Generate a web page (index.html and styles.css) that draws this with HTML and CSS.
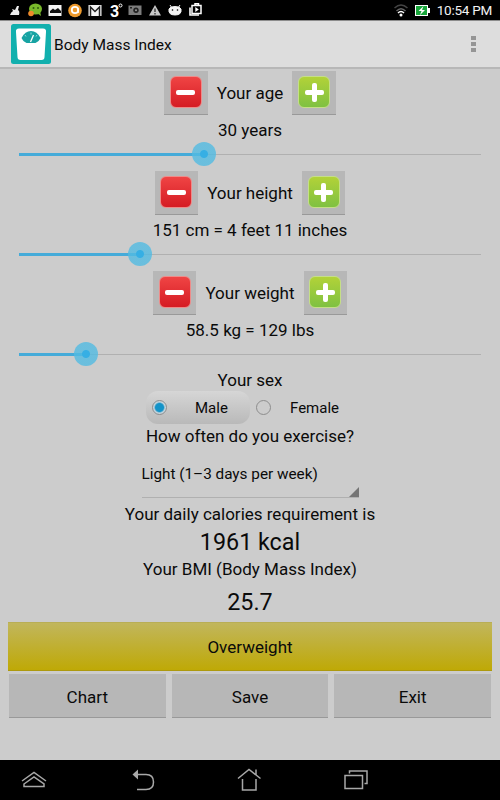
FILE: index.html
```html
<!DOCTYPE html>
<html lang="en">
<head>
    <meta charset="UTF-8">
    <meta name="viewport" content="width=device-width, initial-scale=1.0">
    <title>Body Mass Index</title>
    <link rel="stylesheet" href="styles.css">
</head>
<body>
    <!-- Status bar -->
    <div class="status-bar">
        <svg class="notifications" width="210" height="20" viewBox="0 0 210 20">
            <path d="M10 15q1-3 3-4l-1-2 3 1 2-4 2 0-1 4q2 1 1 5z" fill="#eee"/>
            <ellipse cx="35.500" cy="9" rx="6.500" ry="5.500" fill="#79b82b"/>
            <circle cx="33.500" cy="8" r="1" fill="#2f5c10"/>
            <circle cx="38" cy="8" r="1" fill="#2f5c10"/>
            <circle cx="31" cy="13.500" r="2.800" fill="#f08a2c"/>
            <path d="M37 13l4 3-1-5z" fill="#79b82b"/>
            <rect x="48.500" y="5" width="13" height="11" fill="#f4f4f4"/>
            <path d="M50 13V11l3-2.500 2 1.500 3-2 3 3v2z" fill="#111"/>
            <circle cx="75" cy="10.500" r="6.800" fill="#ee9a2c"/>
            <circle cx="75" cy="10" r="3.200" fill="none" stroke="#fff" stroke-width="1.800"/>
            <path d="M78 8v5" stroke="#fff" stroke-width="1.500"/>
            <rect x="88.500" y="5" width="13" height="11" fill="#f4f4f4"/>
            <path d="M90.500 16V7l4.500 4.500L99.500 7v9" fill="none" stroke="#222" stroke-width="1.500"/>
            <text x="110" y="16.500" class="temperature">3</text>
            <circle cx="120.500" cy="5.500" r="1.500" fill="none" stroke="#fff"/>
            <rect x="128.500" y="5.500" width="13" height="9.500" fill="#7d7d7d"/>
            <circle cx="136" cy="10.300" r="2.700" fill="#222"/>
            <circle cx="136" cy="10.300" r="1" fill="#999"/>
            <rect x="130" y="7" width="2" height="1.500" fill="#222"/>
            <path d="M155 5l6 10.500h-12z" fill="#c9c9c9"/>
            <path d="M155 8.500v3.500M155 13v1.500" stroke="#333" stroke-width="1.300"/>
            <path d="M169 9q1-2.500 6-2.500t6 2.500q1 6-6 6t-6-6zM170 5l2 3M180 5l-2 3" fill="#f4f4f4" stroke="#f4f4f4"/>
            <circle cx="172.500" cy="10" r=".8"/>
            <circle cx="177.500" cy="10" r=".8"/>
            <path d="M190 7.500v7.500h9" fill="none" stroke="#fff" stroke-width="1.600"/>
            <path d="M192 5.500h9v8h-9zM195 5V3.800h3.500V5" fill="none" stroke="#fff" stroke-width="1.500"/>
            <path d="M195.300 7v5l3.500-2.500z" fill="#fff"/>
        </svg>
        <div class="system">
            <svg width="14" height="14" viewBox="0 0 14 14" fill="none">
                <path d="M.5 5Q7-1 13.500 5" stroke="#444" stroke-width="1.500"/>
                <path d="M2.500 8Q7 3.500 11.500 8" stroke="#666" stroke-width="1.500"/>
                <path d="M4 10Q7 7 10 10" stroke="#fff" stroke-width="1.500"/>
                <circle cx="7" cy="12" r="1.500" fill="#fff"/>
            </svg>
            <svg width="15" height="11" viewBox="0 0 15 11">
                <path d="M0 0h13v3h2v5h-2v3H0z" fill="#fff"/>
                <path d="M1 1h11v9H1z" fill="#18a53a"/>
                <path d="M8.500 1L3.500 6h3L5 10l5-5H7z" fill="#fff"/>
            </svg>
            <span class="clock">10:54 PM</span>
        </div>
    </div>

    <!-- App bar -->
    <div class="app-bar">
        <svg width="40" height="40" viewBox="0 0 40 40">
            <rect width="40" height="40" rx="2.500" fill="#12b0ae"/>
            <path d="M8 4.500h24q3.500 0 3 3.500l-1.500 25q0 3-3 3h-21q-3 0-3-3L5 8q-.5-3.500 3-3.500z" fill="#fff"/>
            <path d="M10.500 14Q14 7 20 7t9.500 7q-1 3-5 5h-9q-4-2-5-5z" fill="#17a3a3"/>
            <path d="M19.500 18l3-7" stroke="#fff" stroke-width="1.300"/>
            <path d="M14 11l1 1.500M20 8.500v2M26 11l-1 1.500" stroke="#8cdcda"/>
        </svg>
        <h1>Body Mass Index</h1>
        <div class="menu"><i></i><i></i><i></i></div>
    </div>

    <div class="content">
        <!-- Age -->
        <div class="stepper">
            <button class="step"><span class="icon minus"></span></button>
            <span class="label">Your age</span>
            <button class="step"><span class="icon plus"></span></button>
        </div>
        <div class="value">30 years</div>
        <div class="slider"><div class="fill" style="width: 40%"></div><div class="thumb"></div><div class="rest"></div></div>

        <!-- Height -->
        <div class="stepper">
            <button class="step"><span class="icon minus"></span></button>
            <span class="label">Your height</span>
            <button class="step"><span class="icon plus"></span></button>
        </div>
        <div class="value">151 cm = 4 feet 11 inches</div>
        <div class="slider"><div class="fill" style="width: 26.200%"></div><div class="thumb"></div><div class="rest"></div></div>

        <!-- Weight -->
        <div class="stepper">
            <button class="step"><span class="icon minus"></span></button>
            <span class="label">Your weight</span>
            <button class="step"><span class="icon plus"></span></button>
        </div>
        <div class="value">58.5 kg = 129 lbs</div>
        <div class="slider"><div class="fill" style="width: 14.600%"></div><div class="thumb"></div><div class="rest"></div></div>

        <!-- Sex -->
        <div class="sex-title">Your sex</div>
        <div class="radios">
            <div class="radio selected"><span class="dot"></span><span class="name">Male</span></div>
            <div class="radio"><span class="dot"></span><span class="name">Female</span></div>
        </div>

        <!-- Exercise -->
        <div class="question">How often do you exercise?</div>
        <div class="spinner">
            <span>Light (1–3 days per week)</span>
            <svg width="10" height="10" viewBox="0 0 10 10"><path d="M10 0v10H0z" fill="#757575"/></svg>
        </div>

        <!-- Results -->
        <div class="result-label">Your daily calories requirement is</div>
        <div class="result">1961 kcal</div>
        <div class="result-label bmi-label">Your BMI (Body Mass Index)</div>
        <div class="result bmi">25.7</div>

        <button class="category">Overweight</button>
        <div class="actions">
            <button>Chart</button>
            <button>Save</button>
            <button>Exit</button>
        </div>
    </div>

    <!-- Navigation bar -->
    <div class="nav-bar">
        <svg width="500" height="40" viewBox="0 0 500 40" fill="none" stroke="#a8a8a8" stroke-width="1.500">
            <path d="M22 21l12-8.500L46 21M24 24l10-7 10 7v2.500H24z"/>
            <path d="M137 14.500h9q7.500 0 7.500 7.500t-7.500 7.500h-9"/>
            <path d="M132.500 14.500l5.500-5v10z" fill="#a8a8a8" stroke="none"/>
            <path d="M238 18.500l11-9 11.500 9M256 15V9.500M242.500 19v11h13.500V19"/>
            <path d="M345 15.500h17.500v13H345zM349.500 13.500v-2.500h17.500v12.500h-2.500"/>
        </svg>
    </div>
</body>
</html>
```

FILE: styles.css
```css
* {
    margin: 0;
    padding: 0;
    box-sizing: border-box;
}

body {
    width: 500px;
    height: 800px;
    display: flex;
    flex-direction: column;
    background-color: #cccccc;
    color: #0a0a0a;
    font-family: Roboto, sans-serif;
    font-size: 17px;
    overflow: hidden;
}

button {
    border: none;
    color: inherit;
    font: inherit;
}

/* Status bar */
.status-bar {
    height: 20px;
    background-color: #000;
    display: flex;
    justify-content: space-between;
    padding-right: 8px;
}

.temperature {
    fill: #fff;
    font-size: 16px;
    font-weight: bold;
}

.system {
    display: flex;
    align-items: center;
}

.system svg + svg {
    margin-left: 7px;
}

.clock {
    margin-left: 7px;
    color: #f2f2f2;
    font-size: 13.5px;
    line-height: 20px;
    letter-spacing: -0.25px;
}

/* App bar */
.app-bar {
    height: 49px;
    display: flex;
    align-items: center;
    padding: 0 24px 0 11px;
    background-color: #dddddd;
    border-top: 1px solid #8c8c8c;
    border-bottom: 2px solid #b7b7b7;
}

.app-bar h1 {
    flex: 1;
    margin-left: 3px;
    padding-top: 1px;
    font-size: 15.5px;
    font-weight: normal;
}

.menu {
    display: grid;
    gap: 2px;
}

.menu i {
    width: 5px;
    height: 4px;
    background-color: #959595;
}

/* Main content */
.content {
    flex: 1;
    padding: 2px 8px 0;
    text-align: center;
}

.stepper {
    height: 44px;
    display: flex;
    justify-content: center;
    gap: 9px;
}

.label {
    line-height: 45px;
}

.step {
    width: 43.5px;
    height: 44px;
    padding: 0 0 1px;
    display: grid;
    place-items: center;
    background-color: #b7b7b7;
    border-bottom: 1px solid #999;
}

.icon {
    width: 32px;
    height: 32px;
    display: grid;
    place-items: center;
    border-radius: 6px;
}

.icon::before,
.icon::after {
    content: "";
    grid-area: 1 / 1;
    width: 19px;
    height: 5px;
    border-radius: 2px;
    background-color: #fff;
}

.minus {
    background: linear-gradient(#f04444, #d51c24);
    border: 1px solid #ee8c8a;
}

.minus::after {
    display: none;
}

.plus {
    background: linear-gradient(#b2d238, #7fc142);
    border: 1px solid #c5df87;
}

.plus::after {
    width: 5px;
    height: 19px;
}

.value {
    height: 27px;
    line-height: 31px;
}

/* Slider */
.slider {
    height: 24px;
    margin: 0 11px 5px;
    display: flex;
    align-items: center;
}

.fill {
    height: 3px;
    background-color: #45abd9;
}

.thumb {
    width: 24px;
    height: 24px;
    margin: 0 -12px;
    flex: none;
    z-index: 1;
    border-radius: 50%;
    background: radial-gradient(circle, #36afe4 3.5px, rgba(82, 187, 226, 0.8) 4.5px);
}

.rest {
    flex: 1;
    height: 1px;
    background-color: #b0b0b0;
}

/* Sex */
.sex-title {
    height: 20px;
    line-height: 19px;
}

.radios {
    display: flex;
    margin-left: 138px;
    font-size: 15px;
}

.radio {
    width: 104px;
    height: 33px;
    padding-left: 6px;
    display: flex;
    align-items: center;
    border-radius: 12px;
}

.name {
    padding-top: 1px;
}

.selected {
    background: linear-gradient(#d6d6d6, #b9b9b9);
}

.dot {
    width: 15px;
    height: 15px;
    margin-right: 28px;
    border: 1px solid #8d8d8d;
    border-radius: 50%;
}

.radio:last-child .dot {
    margin-right: 19px;
}

.selected .dot {
    background: radial-gradient(circle, #1493c8 4px, #c4d4dc 5.5px);
}

.question {
    height: 24px;
    line-height: 25px;
}

/* Exercise dropdown */
.spinner {
    width: 217px;
    height: 50px;
    margin: 0 auto;
    display: flex;
    justify-content: space-between;
    align-items: flex-end;
    border-bottom: 1px solid #b0b0b0;
    font-size: 15.3px;
}

.spinner span {
    line-height: 45px;
    white-space: nowrap;
}

/* Results */
.result-label {
    height: 30px;
    line-height: 32px;
}

.result {
    height: 26px;
    font-size: 23.3px;
    line-height: 28px;
}

.bmi-label {
    height: 29px;
    line-height: 31px;
}

.bmi {
    height: 39px;
    line-height: 39px;
}

.category {
    width: 100%;
    height: 49px;
    padding-top: 1px;
    background: linear-gradient(#c1b65c, #bfa906);
    border-top: 1px solid #b9ae54;
    border-bottom: 1px solid #ad990e;
}

.actions {
    display: grid;
    grid-template-columns: 1fr 1fr 1fr;
    gap: 6px;
    margin: 3px 1px 0;
}

.actions button {
    height: 44px;
    padding-top: 2px;
    background-color: #b7b7b7;
    border-bottom: 1px solid #999;
}

/* Navigation bar */
.nav-bar {
    height: 40px;
    background-color: #000;
}
```
